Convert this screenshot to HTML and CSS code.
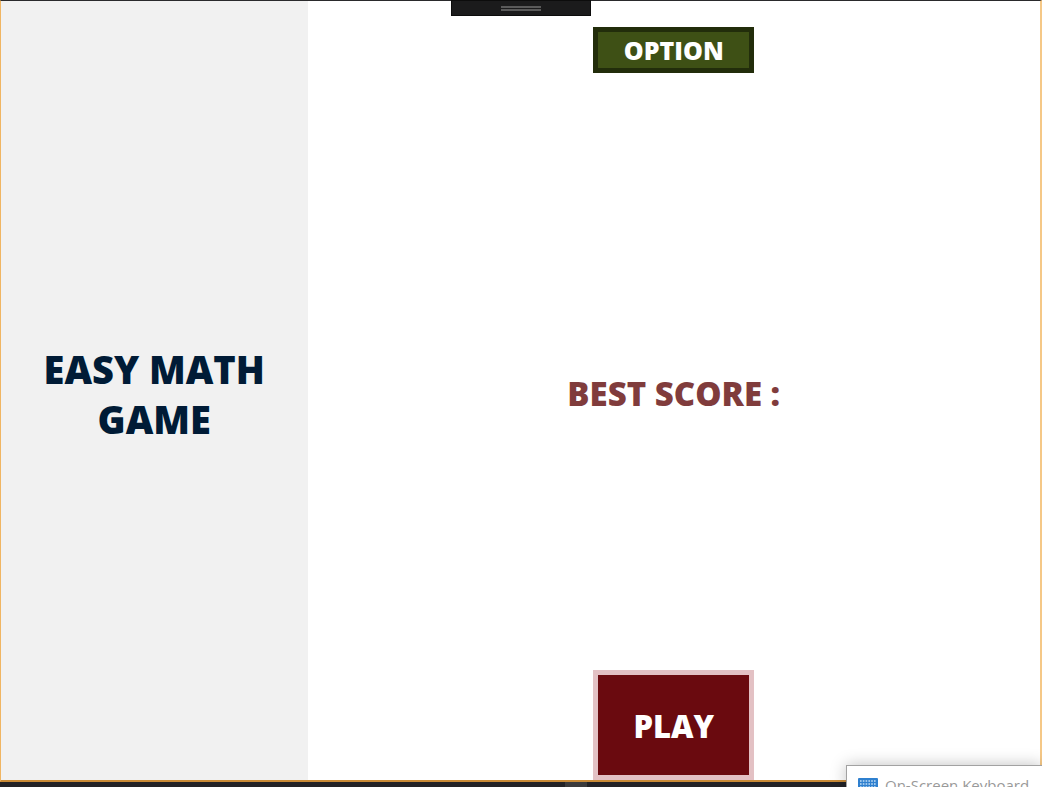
FILE: index.html
```
<!DOCTYPE html>
<html lang="en">
<head>
  <meta charset="UTF-8">
  <title>Easy Math Game</title>
  <meta name="viewport" content="width=device-width, initial-scale=1.0">
  <link rel="stylesheet" href="styles.css">
</head>
<body>

  <div class="window">
    <aside class="sidebar">
      <h1>EASY MATH GAME</h1>
    </aside>

    <main class="menu">
      <button class="btn option-btn" type="button">OPTION</button>
      <p class="best-score">BEST SCORE :</p>
      <button class="btn play-btn" type="button">PLAY</button>
    </main>
  </div>

  <div class="taskbar"><span class="taskbar-grip"></span></div>

  <!-- debug toolbar handle -->
  <div class="handle"><span class="grip"></span></div>

  <div class="keyboard">
    <svg class="keyboard-icon" width="20" height="14" viewBox="0 0 20 14">
      <rect width="20" height="14" rx="1" fill="#2f80cf"/>
      <path d="M2 3h16M2 6h16M2 9h16" stroke="#c4def5" stroke-width="1.4" stroke-dasharray="1.6 1.2"/>
      <path d="M5 12h10" stroke="#c4def5" stroke-width="1.4"/>
    </svg>
    <span>On-Screen Keyboard</span>
  </div>

</body>
</html>
```
FILE: styles.css
```
* {
  box-sizing: border-box;
}

body {
  margin: 0;
  height: 100vh;
  display: flex;
  flex-direction: column;
  overflow: hidden;
  background: #fff;
  font-family: "Open Sans", "Segoe UI", sans-serif;
}

.window {
  flex: 1;
  min-height: 0;
  display: flex;
  border: 1px solid #f0b562;
  border-top-color: #2a2a2c;
  border-right: 2px solid #f5c887;
  border-bottom: 2px solid #c98a35;
}

.sidebar {
  width: 29.5%;
  padding: 0 32px;
  display: flex;
  align-items: center;
  justify-content: center;
  background: #f1f1f1;
}

.sidebar h1 {
  margin: 0;
  padding-top: 6px;
  color: #001b36;
  font-size: 38px;
  font-weight: 800;
  line-height: 50px;
  text-align: center;
}

.menu {
  flex: 1;
  padding-top: 26px;
  display: flex;
  flex-direction: column;
  align-items: center;
  justify-content: space-between;
}

.btn {
  width: 161px;
  padding: 0;
  color: #fff;
  font-family: inherit;
  font-weight: 800;
  cursor: pointer;
}

.option-btn {
  height: 46px;
  background: #3e5015;
  border: 5px solid #222d0b;
  font-size: 25px;
  line-height: 36px;
}

.best-score {
  margin: 0;
  padding-top: 44px;
  color: #803c3c;
  font-size: 33px;
  font-weight: 800;
  line-height: 44px;
}

.play-btn {
  height: 110px;
  padding-top: 2px;
  background: #6a0a0f;
  border: 5px solid #e3c1c4;
  font-size: 31px;
}

.taskbar {
  height: 5px;
  display: flex;
  justify-content: center;
  background: #222226;
}

.taskbar-grip {
  width: 22px;
  margin-left: 110px;
  background: #3a3a3c;
}

.handle {
  position: absolute;
  top: 0;
  left: 50%;
  width: 140px;
  height: 16px;
  display: flex;
  align-items: center;
  justify-content: center;
  background: #1b1b1c;
  border: 1px solid #0c0c0c;
  transform: translateX(-50%);
}

.grip {
  width: 40px;
  height: 5px;
  border: solid #5a5a5a;
  border-width: 2px 0;
}

.keyboard {
  position: absolute;
  right: 0;
  bottom: 0;
  width: 196px;
  height: 22px;
  padding: 12px 0 0 11px;
  display: flex;
  align-items: flex-start;
  gap: 7px;
  overflow: hidden;
  background: #fff;
  border: solid #a2a2a2;
  border-width: 1px 0 0 1px;
  box-shadow: 0 0 16px rgba(0, 0, 0, 0.25);
  color: #999;
  font-size: 15px;
  line-height: 14px;
  white-space: nowrap;
}

.keyboard-icon {
  flex: none;
}
```
